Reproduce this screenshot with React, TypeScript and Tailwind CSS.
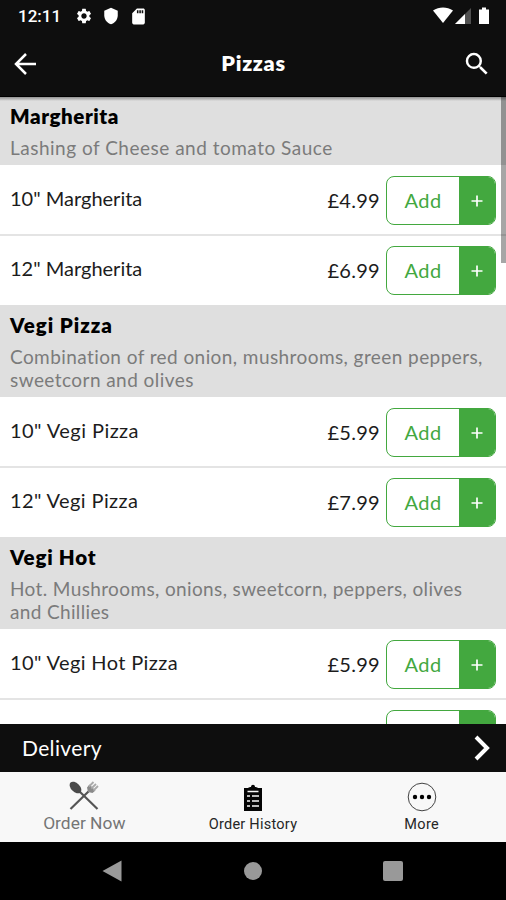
import { MdSettings, MdShield, MdSdCard, MdSearch } from "react-icons/md";

type Item = { name: string; price: string; nameClass: string };
type Section = { title: string; titleClass: string; lines: { text: string; className: string }[]; items: Item[] };

const sections: Section[] = [
  {
    title: "Margherita",
    titleClass: "tracking-[0.55px]",
    lines: [{ text: "Lashing of Cheese and tomato Sauce", className: "tracking-[0.5px]" }],
    items: [
      { name: '10" Margherita', price: "£4.99", nameClass: "tracking-[0px]" },
      { name: '12" Margherita', price: "£6.99", nameClass: "tracking-[0px]" },
    ],
  },
  {
    title: "Vegi Pizza",
    titleClass: "tracking-[0.95px]",
    lines: [
      { text: "Combination of red onion, mushrooms, green peppers,", className: "tracking-[0.42px]" },
      { text: "sweetcorn and olives", className: "tracking-[0.44px]" },
    ],
    items: [
      { name: '10" Vegi Pizza', price: "£5.99", nameClass: "tracking-[0.45px]" },
      { name: '12" Vegi Pizza', price: "£7.99", nameClass: "tracking-[0.4px]" },
    ],
  },
  {
    title: "Vegi Hot",
    titleClass: "tracking-[0.75px]",
    lines: [
      { text: "Hot. Mushrooms, onions, sweetcorn, peppers, olives", className: "tracking-[0.37px]" },
      { text: "and Chillies", className: "tracking-[0.35px]" },
    ],
    items: [{ name: '10" Vegi Hot Pizza', price: "£5.99", nameClass: "tracking-[0.38px]" }],
  },
];

function StatusBar() {
  return (
    <div className="flex h-8 items-center justify-between pl-[18px] pr-[15px] text-white">
      <div className="flex items-center">
        <span className="w-[57px] pt-px font-['Roboto'] text-[17px] font-medium leading-none">12:11</span>
        <MdSettings className="size-[18px]" />
        <MdShield className="ml-[9px] size-[18px]" />
        <MdSdCard className="ml-[9px] size-[19px]" />
      </div>
      <svg width="58" height="18" viewBox="0 0 58 18">
        <path d="M0 3.5C6-.6 14-.6 20 3.5L10 16z" fill="#fff" />
        <path d="M38 1v16H22z" fill="#505050" />
        <path d="M32 7v10H22z" fill="#fff" />
        <path d="M46 2.5h3V.5h4v2h3V17H46z" fill="#fff" />
      </svg>
    </div>
  );
}

function Header() {
  return (
    <header className="flex h-[63px] items-center justify-between px-[14px] text-white">
      <svg width="23" height="22" viewBox="0 0 23 22" fill="none" stroke="currentColor" strokeWidth="2.5">
        <path d="M22 11H2M12 1L2 11l10 10" />
      </svg>
      <h1 className="pb-px pl-[8px] text-[21.5px] font-extrabold tracking-[0.7px]">Pizzas</h1>
      <MdSearch className="size-[30px]" />
    </header>
  );
}

function AddButton({ label }: { label?: string }) {
  return (
    <button className="flex h-[49px] w-[110px] shrink-0 overflow-hidden rounded-[8px] border border-[#43a83f] text-[20px] text-[#43a83f]">
      <span className="flex h-full w-[72px] items-center justify-center pb-px tracking-[0.5px]">{label}</span>
      <span className="flex h-full flex-1 items-center justify-center bg-[#43a83f] text-white">
        <svg width="12" height="12" viewBox="0 0 12 12" stroke="currentColor" strokeWidth="1.7">
          <path d="M6 .5v11M.5 6h11" />
        </svg>
      </span>
    </button>
  );
}

function MenuItem({ item, divider }: { item: Item; divider: boolean }) {
  return (
    <div className="flex h-[70px] shrink-0 flex-col">
      <div className="flex h-[69px] shrink-0 px-[10px] pt-[11px]">
        <span className={`flex-1 pt-[8px] text-[20px] leading-7 text-[#1c1c1c] ${item.nameClass}`}>{item.name}</span>
        <span className="pr-[6px] pt-[10px] text-[20px] leading-7 tracking-[0.3px] text-[#1c1c1c]">{item.price}</span>
        <AddButton label="Add" />
      </div>
      {divider && <div className="h-[2px] shrink-0 bg-[#e4e4e4]" />}
    </div>
  );
}

function MenuSection({ section }: { section: Section }) {
  return (
    <section className="shrink-0">
      <div className="bg-[#dfdfdf] pb-[6px] pl-[10px] pt-[7px]">
        <h2 className={`pb-[7px] text-[20.5px] font-extrabold leading-[26px] text-black ${section.titleClass}`}>{section.title}</h2>
        {section.lines.map((line) => (
          <p key={line.text} className="h-[23px] whitespace-nowrap text-[19px] leading-[23px] text-[#7b7b7b]">
            <span className={line.className}>{line.text}</span>
          </p>
        ))}
      </div>
      {section.items.map((item, i) => (
        <MenuItem key={item.name} item={item} divider={i === 0} />
      ))}
    </section>
  );
}

function TabBar() {
  return (
    <nav className="grid h-[70px] grid-cols-3 bg-[#f8f8f8] font-['Roboto'] text-[#262626]">
      <div className="flex flex-col items-center pt-[9px]">
        <svg width="30" height="30" viewBox="0 0 30 30">
          <path d="M9 9L28.5 28M1.500 28L21 9" stroke="#555" strokeWidth="2.2" fill="none" />
          <ellipse cx="6.5" cy="6.5" rx="7" ry="4.4" transform="rotate(45 6.5 6.5)" fill="#4a4a4a" />
          <path d="M18 6.500l1 4.500 4.500 1 3-2.500-6-6z" fill="#8a8a8a" />
          <path d="M20 5.500l4.500-4.500M22.300 7.500L27 3M24.500 9.500L29 5" stroke="#aaa" strokeWidth="1.8" />
        </svg>
        <span className="text-[17.4px] leading-6 text-[#757575]">Order Now</span>
      </div>
      <div className="flex flex-col items-center pt-[12px]">
        <svg width="20" height="27" viewBox="0 0 20 27">
          <path d="M1 4h4c1-1 2-1 3-1 0-3 4-3 4 0 1 0 2 0 3 1h4v23H1z" fill="#050505" />
          <path d="M4.500 7.500h11M4 12h3M9 12h7M4 17h3M9 17h7M4 22h3M9 22h7" stroke="#f8f8f8" strokeWidth="1.7" />
        </svg>
        <span className="mt-[2px] text-[14.5px] leading-6 tracking-[0.25px]">Order History</span>
      </div>
      <div className="flex flex-col items-center pt-[10px]">
        <svg width="30" height="30" viewBox="0 0 30 30">
          <circle cx="15" cy="15" r="13.8" fill="none" stroke="#444" />
          <circle cx="8" cy="15" r="2.2" />
          <circle cx="15" cy="15" r="2.2" />
          <circle cx="22" cy="15" r="2.2" />
        </svg>
        <span className="mt-px text-[14.5px] leading-6 tracking-[0.3px]">More</span>
      </div>
    </nav>
  );
}

export default function App() {
  return (
    <div className="flex h-[900px] w-[506px] flex-col overflow-hidden bg-black font-['Lato',sans-serif]">
      <div className="h-24 shrink-0 bg-[#0e0e0e]">
        <StatusBar />
        <Header />
      </div>

      {/* Scrollable menu */}
      <main className="relative flex h-[628px] shrink-0 flex-col overflow-hidden bg-white">
        {sections.map((section) => (
          <MenuSection key={section.title} section={section} />
        ))}
        {/* Next row, only its top edge is in view */}
        <div className="flex shrink-0 justify-end px-[10px] pt-[11px]">
          <AddButton />
        </div>
        <div className="absolute inset-x-0 top-0 h-[5px] border-t border-black bg-linear-to-b from-black/35 to-transparent" />
        <div className="absolute right-0 top-px h-[166px] w-[5px] bg-black/35" />
      </main>

      <div className="flex h-12 shrink-0 items-center justify-between bg-[#0e0e0e] pl-[22px] pr-[15px] text-white">
        <span className="text-[21px] tracking-[0.35px]">Delivery</span>
        <svg width="17" height="26" viewBox="0 0 17 26" fill="none" stroke="currentColor" strokeWidth="4">
          <path d="M2 2l11 11L2 24" />
        </svg>
      </div>

      <TabBar />

      {/* Android navigation buttons */}
      <div className="grid h-[58px] grid-cols-[183px_140px_183px] items-center text-[#999]">
        <svg className="ml-[102px]" width="20" height="22" viewBox="0 0 20 22" fill="currentColor">
          <path d="M19.5 .5v21L.5 11z" />
        </svg>
        <div className="size-[18px] justify-self-center rounded-full bg-[#999]" />
        <div className="ml-[60px] size-[20px] rounded-[2px] bg-[#999]" />
      </div>
    </div>
  );
}
